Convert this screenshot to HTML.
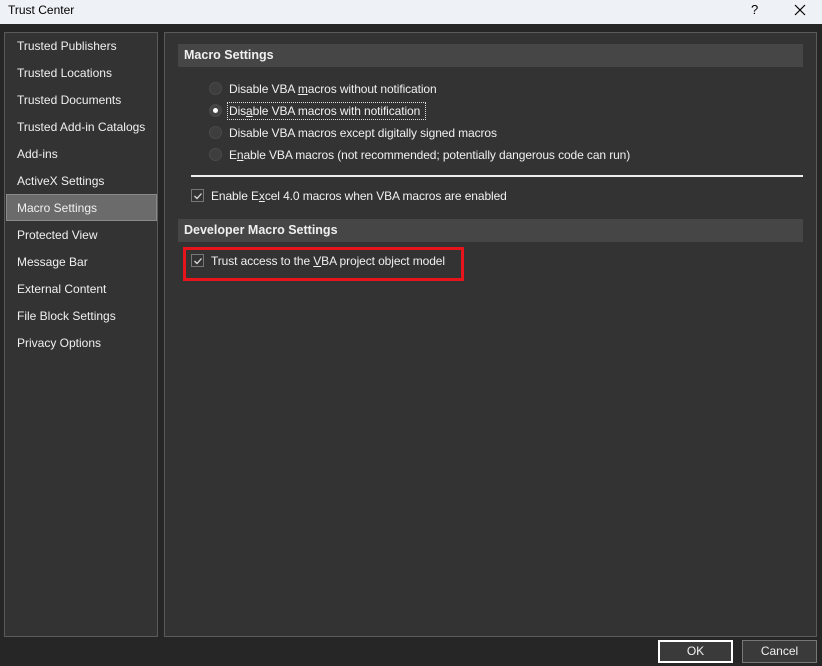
<!DOCTYPE html>
<html><head><style>
*{margin:0;padding:0;box-sizing:border-box}
body{width:822px;height:666px;background:#262626;font-family:"Segoe UI","Liberation Sans",sans-serif;font-size:12px;color:#f0f0f0;position:relative;overflow:hidden}
.abs{position:absolute}
.title{left:0;top:0;width:822px;height:24px;background:#eef1f5;color:#000}
.panel{background:#333;border:1px solid #5a5a5a}
.nav div{position:absolute;left:12px;white-space:nowrap}
.hdr{background:#464646;font-weight:bold;padding-left:6px;line-height:23px;font-size:12.5px}
.radio{width:13px;height:13px;border-radius:50%;background:#3e3e3e;border:1px solid #4a4a4a}
.cb{width:13px;height:13px;border:1px solid #777;background:#333}
u{text-decoration:underline}
.btn{border:1px solid #777;background:#3a3a3a;text-align:center;line-height:20px}
.t{letter-spacing:-0.1px}
</style></head><body>
<div class="abs title"><span class="abs" style="left:8px;top:3px;font-size:12px">Trust Center</span>
<span class="abs" style="left:751px;top:2px;font-size:13px">?</span>
<svg class="abs" style="left:794px;top:4px" width="12" height="12"><path d="M1 1L11 11M11 1L1 11" stroke="#000" stroke-width="1.2"/></svg></div>

<div class="abs panel" style="left:4px;top:32px;width:154px;height:605px"></div>
<div class="abs" style="left:6px;top:194px;width:151px;height:27px;background:#6b6b6b;border:1px solid #8a8a8a"></div>
<div class="abs nav" style="left:5px;top:1px">
<div style="top:38px">Trusted Publishers</div>
<div style="top:65px">Trusted Locations</div>
<div style="top:92px">Trusted Documents</div>
<div style="top:119px">Trusted Add-in Catalogs</div>
<div style="top:146px">Add-ins</div>
<div style="top:173px">ActiveX Settings</div>
<div style="top:200px">Macro Settings</div>
<div style="top:227px">Protected View</div>
<div style="top:254px">Message Bar</div>
<div style="top:281px">External Content</div>
<div style="top:308px">File Block Settings</div>
<div style="top:335px">Privacy Options</div>
</div>

<div class="abs panel" style="left:164px;top:32px;width:653px;height:605px"></div>
<div class="abs hdr" style="left:178px;top:44px;width:625px;height:23px">Macro Settings</div>
<div class="abs radio" style="left:209px;top:82px"></div>
<div class="abs t" style="left:229px;top:82px">Disable VBA <u>m</u>acros without notification</div>
<div class="abs radio" style="left:209px;top:104px;background:#444"></div>
<div class="abs" style="left:213px;top:108px;width:5px;height:5px;border-radius:50%;background:#fff"></div>
<div class="abs" style="left:227px;top:102px;width:199px;height:18px;border:1px dotted #ddd"></div>
<div class="abs t" style="left:229px;top:104px">Dis<u>a</u>ble VBA macros with notification</div>
<div class="abs radio" style="left:209px;top:126px"></div>
<div class="abs t" style="left:229px;top:126px">Disable VBA macros except digitally signed macros</div>
<div class="abs radio" style="left:209px;top:148px"></div>
<div class="abs t" style="left:229px;top:148px">E<u>n</u>able VBA macros (not recommended; potentially dangerous code can run)</div>
<div class="abs" style="left:191px;top:175px;width:612px;height:2px;background:#eee"></div>
<div class="abs cb" style="left:191px;top:189px"></div>
<svg class="abs" style="left:193px;top:191px" width="10" height="10"><path d="M1.5 5L4 7.5L8.5 2.5" stroke="#ddd" stroke-width="1.3" fill="none"/></svg>
<div class="abs t" style="left:211px;top:189px">Enable E<u>x</u>cel 4.0 macros when VBA macros are enabled</div>
<div class="abs hdr" style="left:178px;top:219px;width:625px;height:23px">Developer Macro Settings</div>
<div class="abs" style="left:183px;top:247px;width:281px;height:34px;border:3px solid #e8141c"></div>
<div class="abs cb" style="left:191px;top:254px"></div>
<svg class="abs" style="left:193px;top:256px" width="10" height="10"><path d="M1.5 5L4 7.5L8.5 2.5" stroke="#ddd" stroke-width="1.3" fill="none"/></svg>
<div class="abs t" style="left:211px;top:254px">Trust access to the <u>V</u>BA project object model</div>

<div class="abs btn" style="left:658px;top:640px;width:75px;height:23px;border:2px solid #fff;line-height:19px">OK</div>
<div class="abs btn" style="left:742px;top:640px;width:75px;height:23px">Cancel</div>
</body></html>
